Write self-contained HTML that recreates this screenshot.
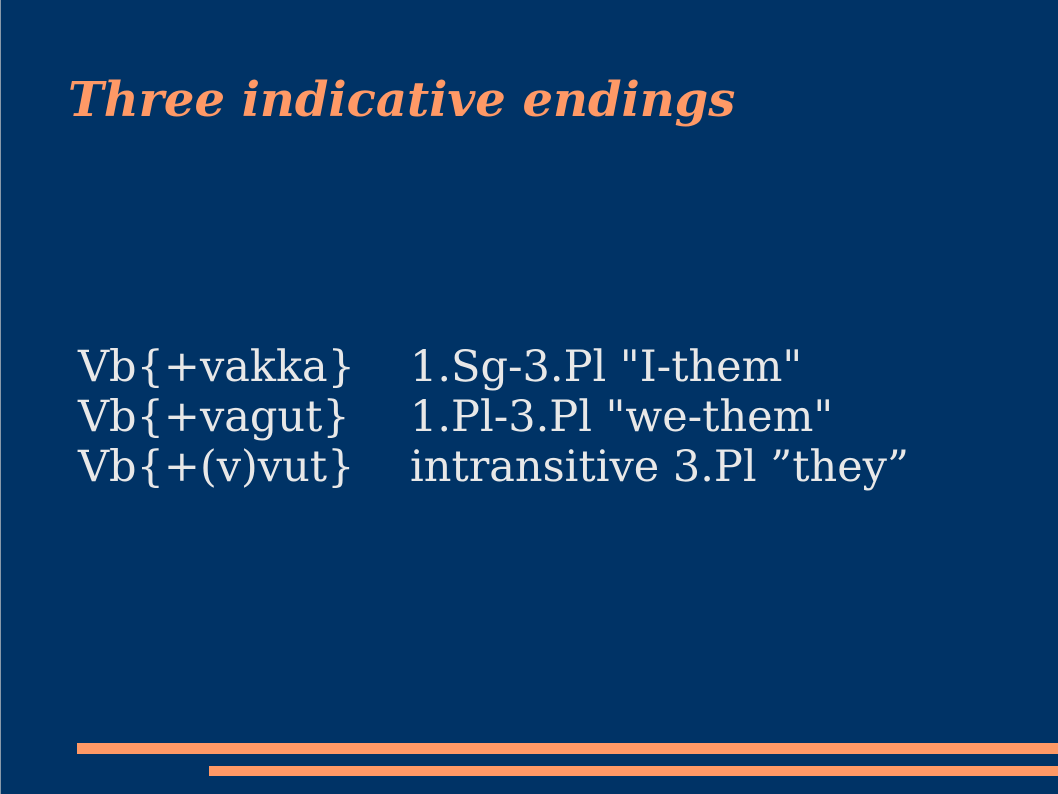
<!DOCTYPE html>
<html><head><style>
html,body{margin:0;padding:0;}
body{width:1058px;height:794px;background:#003366;position:relative;overflow:hidden;font-family:"DejaVu Serif",serif;}
.lb{position:absolute;left:0;top:0;width:1px;height:794px;background:#8899aa;}
.t{position:absolute;left:68px;top:72px;font-size:48px;font-weight:bold;font-style:italic;color:#ff9966;white-space:nowrap;line-height:56px;}
.r{position:absolute;font-size:43px;color:#e8e8e8;white-space:nowrap;line-height:50px;}
.b1{position:absolute;left:77px;top:743px;width:981px;height:11px;background:#ff9966;}
.b2{position:absolute;left:209px;top:766px;width:849px;height:10px;background:#ff9966;}
</style></head><body>
<div class="lb"></div>
<div class="t">Three indicative endings</div>
<div class="r" style="left:78px;top:342px">Vb{+vakka}</div>
<div class="r" style="left:410px;top:342px">1.Sg-3.Pl "I-them"</div>
<div class="r" style="left:78px;top:392px">Vb{+vagut}</div>
<div class="r" style="left:410px;top:392px">1.Pl-3.Pl "we-them"</div>
<div class="r" style="left:78px;top:442px">Vb{+(v)vut}</div>
<div class="r" style="left:410px;top:442px">intransitive 3.Pl ”they”</div>
<div class="b1"></div>
<div class="b2"></div>
</body></html>
